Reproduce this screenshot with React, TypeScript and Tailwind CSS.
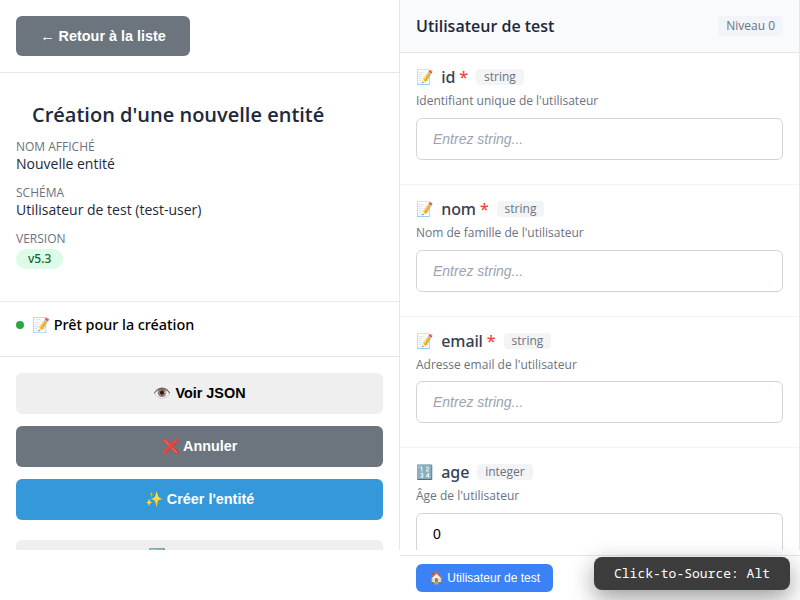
const fields = [
  { icon: "📝", name: "id", required: true, type: "string", description: "Identifiant unique de l'utilisateur" },
  { icon: "📝", name: "nom", required: true, type: "string", description: "Nom de famille de l'utilisateur" },
  { icon: "📝", name: "email", required: true, type: "string", description: "Adresse email de l'utilisateur" },
  { icon: "🔢", name: "age", required: false, type: "integer", description: "Âge de l'utilisateur", value: "0" },
];

function Field({ field }: { field: (typeof fields)[number] }) {
  return (
    <div className="h-[131.8px] shrink-0 border-b border-[#f1f5f9] px-4 pt-4">
      <div className="flex h-4 items-center gap-2">
        <span className="flex items-center font-['Noto_Sans',sans-serif] text-base leading-4 font-medium tracking-[-0.12px] text-[#374151]">
          <span className="w-[25.3px] text-sm leading-4 tracking-normal">{field.icon}</span>
          <span>
            {field.name}
            {field.required && <span className="text-[#ef4444]"> *</span>}
          </span>
        </span>
        <span className="h-4 rounded bg-[#f3f4f6] px-2 text-xs leading-4 text-[#6b7280]">{field.type}</span>
      </div>
      <p className="mt-2 h-4 text-xs leading-4 text-[#6b7280]">{field.description}</p>
      <input
        className="mt-[8.8px] block h-[42px] w-full rounded-md border border-[#d1d5db] bg-white px-4 font-['Liberation_Sans',Arial,sans-serif] text-sm text-black placeholder:text-[#9ca3af] placeholder:italic"
        placeholder="Entrez string..."
        defaultValue={field.value}
      />
    </div>
  );
}

function Info({ label, children }: { label: string; children: React.ReactNode }) {
  return (
    <div className="h-[46px]">
      <div className="text-xs leading-4 text-[#6b7280]">{label}</div>
      {children}
    </div>
  );
}

const action = "w-full shrink-0 rounded-md text-center font-['Liberation_Sans',Arial,sans-serif] text-[14.4px] font-bold";

export default function App() {
  return (
    <div className="relative h-[600px] w-[800px] overflow-hidden bg-white font-['Open_Sans',sans-serif] text-black">
      <div className="flex h-[550px] overflow-hidden">
        <aside className="flex w-[400px] shrink-0 flex-col border-r border-[#e5e7eb]">
          <header className="h-[73px] shrink-0 border-b border-[#e5e7eb] p-4">
            <button className="h-10 w-[174px] rounded-md bg-[#6c757d] pt-px font-['Liberation_Sans',Arial,sans-serif] text-[14.4px] font-bold text-white">
              ← Retour à la liste
            </button>
          </header>
          <section className="h-[229px] shrink-0 border-b border-[#e5e7eb] px-4 pt-[27px]">
            <h1 className="mb-[9px] pl-4 text-xl leading-[30px] font-semibold text-[#1e293b]">Création d'une nouvelle entité</h1>
            <Info label="NOM AFFICHÉ">
              <div className="text-sm leading-[18px] text-[#1e293b]">Nouvelle entité</div>
            </Info>
            <Info label="SCHÉMA">
              <div className="text-sm leading-[18px] text-[#1e293b]">Utilisateur de test (test-user)</div>
            </Info>
            <Info label="VERSION">
              <span className="mt-[2px] block h-5 w-fit rounded-full bg-[#dcfce7] px-3 font-['Noto_Sans',sans-serif] text-xs leading-[19px] font-medium text-[#166534]">v5.3</span>
            </Info>
          </section>
          <section className="flex h-[55px] shrink-0 items-start gap-2 border-b border-[#e5e7eb] px-4 pt-[13px]">
            <span className="mt-[6px] size-2 rounded-full bg-[#28a745]" />
            <span className="font-['Noto_Sans',sans-serif] text-[14.4px] leading-5 font-medium tracking-[-0.03px]">📝 Prêt pour la création</span>
          </section>
          <section className="flex flex-col gap-3 px-4 pt-4">
            <button className={`${action} h-[41px] bg-[#efefef] text-black`}>👁️ Voir JSON</button>
            <button className={`${action} h-[41px] bg-[#6c757d] text-white`}>❌ Annuler</button>
            <button className={`${action} h-[41px] bg-[#3498db] text-white`}>✨ Créer l'entité</button>
            <button className={`${action} mt-2 h-[33px] bg-[#efefef] text-black`}>🔄 Réinitialiser</button>
          </section>
        </aside>
        <main className="flex w-[400px] shrink-0 flex-col border-r border-[#e5e7eb]">
          <header className="flex h-[53px] shrink-0 items-center justify-between border-b border-[#e5e7eb] bg-[#f8fafc] px-4">
            <h2 className="text-base font-semibold text-[#1e293b]">Utilisateur de test</h2>
            <span className="h-5 rounded bg-[#f1f5f9] px-2 text-xs leading-5 text-[#6b7280]">Niveau 0</span>
          </header>
          {fields.map((field) => (
            <Field key={field.name} field={field} />
          ))}
        </main>
      </div>
      <footer className="mt-[5px] ml-[400px] h-[45px] border-t border-[#e5e7eb] px-4 pt-2">
        <button className="h-7 w-[137px] rounded-md bg-[#3b82f6] font-['Liberation_Sans',Arial,sans-serif] text-xs text-white">🏠 Utilisateur de test</button>
      </footer>
      <div className="absolute right-[10px] bottom-[10px] h-[33px] w-[196px] rounded-lg bg-[#3c3c3c] text-center font-['Noto_Sans_Mono',monospace] text-[13px] leading-[33px] text-white shadow-[0_8px_24px_rgba(0,0,0,0.4)]">
        Click-to-Source: Alt
      </div>
    </div>
  );
}
